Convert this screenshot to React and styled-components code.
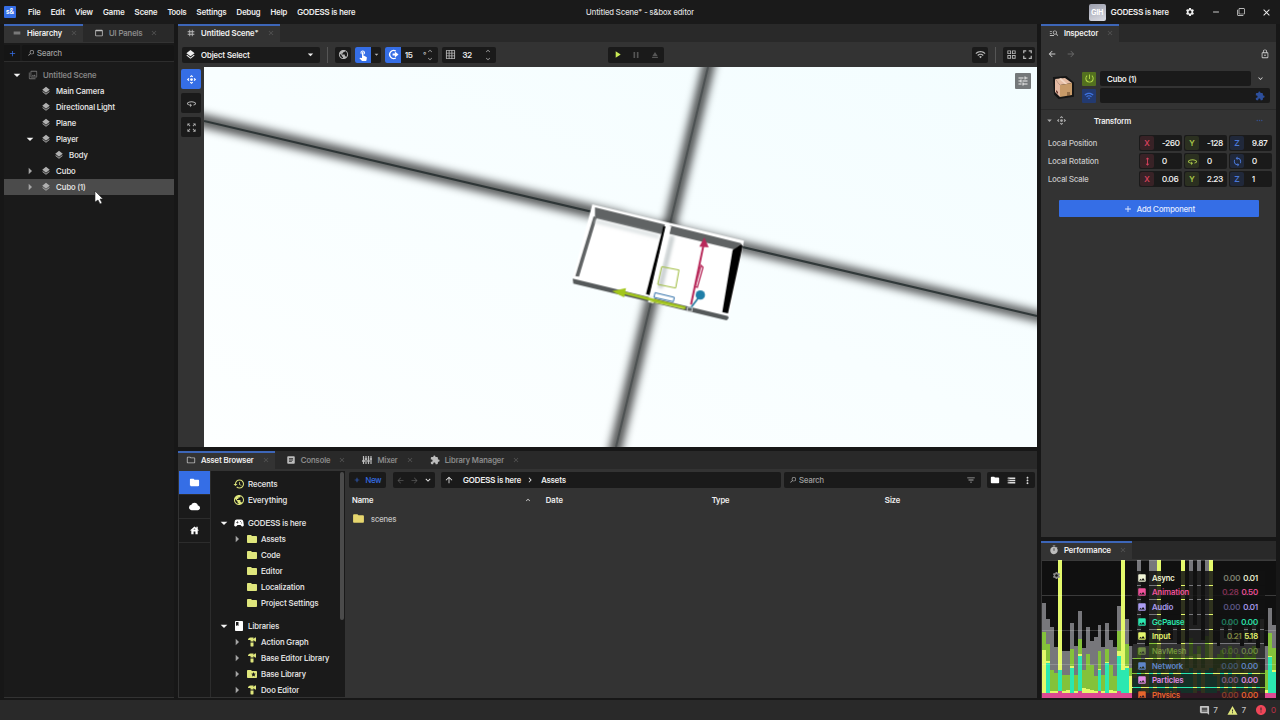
import React, { useState } from 'react';
import styled, { createGlobalStyle } from 'styled-components';
import {
  MdAdd, MdArrowBack, MdArrowDropDown, MdArrowForward, MdArrowRight, MdArrowUpward,
  MdBook, MdClose, MdCloud, MdComment, MdControlCamera, MdDragHandle, MdEject, MdError,
  MdExpandLess, MdExpandMore, MdExtension, MdFilterList, MdFolder,
  MdFolderSpecial, MdHardware, MdGridOn, MdGridView, MdHeight, MdHistory, MdHouse, MdImage,
  MdKeyboardArrowRight, MdLayers, MdManageSearch, MdMoreHoriz, MdMoreVert, MdOutlineFolder,
  MdOutlineZoomOutMap, MdPause, MdPlayArrow, MdPowerSettingsNew, MdPublic, MdRemove,
  MdSettings, MdSportsEsports, MdStorage, MdSync, MdTag, MdTimer, MdTouchApp, MdTune,
  MdWarning, MdWebAsset, MdWifi, Md360, MdFullscreen, MdFilterNone, MdSearch,
  MdArticle, MdOutlineLock, MdOutlinePhotoLibrary,
} from 'react-icons/md';

const GlobalStyle = createGlobalStyle`
  :root {
    --back: #171717;
    --well: #1a1a1a;
    --bar: #292929;
    --panel: #333333;
    --blue: #356ee6;
    --lime: #dfe67c;
    --text: #dedede;
    --muted: #8a8a8a;
  }

  * {
    box-sizing: border-box;
  }

  body {
    margin: 0;
    background: var(--back);
    color: var(--text);
    font-family: "Inter Display", Inter, "Liberation Sans", sans-serif;
    font-variation-settings: "opsz" 32;
    font-size: 8px;
    line-height: 10px;
    font-weight: 500;
  }

  button, input, select {
    margin: 0;
    padding: 0;
    border: 0;
    background: none;
    color: inherit;
    font: inherit;
    font-variation-settings: inherit;
  }

  svg {
    display: block;
    flex: none;
  }
`;

const Shell = styled.div`
  height: 100vh;
  display: flex;
  flex-direction: column;
`;

const TitleBar = styled.header`
  display: grid;
  grid-template-columns: 1fr auto 1fr;
  align-items: center;
  height: 24px;
  flex: none;
  background: var(--well);
`;

const MenuRow = styled.nav`
  display: flex;
  align-items: center;
  gap: 10px;
  padding-left: 4px;
  font-weight: 600;
  color: #eee;
`;

const Logo = styled.span`
  width: 12px;
  height: 12px;
  margin-right: 2px;
  border-radius: 1px;
  background: var(--blue);
  color: white;
  font-size: 7px;
  line-height: 12px;
  text-align: center;
`;

const WindowControls = styled.div`
  display: flex;
  align-items: center;
  justify-content: flex-end;
  gap: 16px;
  padding-right: 8px;
  color: #eee;

  button {
    display: flex;
  }
`;

const Account = styled.div`
  display: flex;
  align-items: center;
  gap: 5px;
  font-weight: 600;
`;

const Avatar = styled.span`
  width: 17px;
  height: 17px;
  border-radius: 2px;
  background: linear-gradient(160deg, #9a9dab, #dcdde4);
  color: white;
  font-size: 7px;
  font-weight: 700;
  line-height: 17px;
  text-align: center;
`;

const Workspace = styled.main`
  flex: 1;
  min-height: 0;
  display: grid;
  grid-template-columns: 170px minmax(0, 1fr) 235px;
  gap: 4px;
  padding: 0 4px 2px 4px;
`;

const Column = styled.div`
  min-width: 0;
  min-height: 0;
  display: flex;
  flex-direction: column;
  gap: 4px;
`;

const Panel = styled.section`
  display: flex;
  flex-direction: column;
  min-height: 0;
  overflow: hidden;
  flex: ${props => (props.$height ? `0 0 ${props.$height}` : '1')};
  background: var(--panel);
`;

const TabBar = styled.div`
  display: flex;
  flex: none;
  height: 18px;
  background: var(--bar);
`;

const TabButton = styled.div`
  display: flex;
  align-items: center;
  height: 18px;
  padding-left: ${props => (props.$active ? '0' : '3px')};
  padding-right: 5px;
  box-shadow: inset 0 2px ${props => (props.$active ? '#3d66b8' : 'transparent')};
  background: ${props => (props.$active ? 'var(--panel)' : 'transparent')};
  color: ${props => (props.$active ? '#f0f0f0' : 'var(--muted)')};
  font-weight: 600;

  button {
    display: flex;
    align-items: center;
    gap: 5px;
    padding-left: 8px;
    white-space: nowrap;
  }

  button > svg {
    color: #bdbdbd;
  }

  button:last-child {
    color: #555;
  }

  button:last-child > svg {
    color: #555;
  }
`;

const HierarchyBody = styled.div`
  flex: 1;
  display: flex;
  flex-direction: column;
  margin: 1px 0;
  background: var(--well);
`;

const SearchRow = styled.div`
  display: flex;
  gap: 2px;
  padding-top: 2px;
  border-bottom: 1px solid #2d2d2d;
`;

const AddButton = styled.button`
  display: flex;
  align-items: center;
  justify-content: center;
  width: 16px;
  height: 16px;
  background: #151515;
  color: var(--blue);
`;

const SearchBox = styled.label`
  flex: 1;
  min-width: 0;
  display: flex;
  align-items: center;
  gap: 2px;
  height: 16px;
  padding: 0 5px;
  border-radius: 2px;
  background: #151515;
  color: #aaa;

  input {
    flex: 1;
    min-width: 0;
    outline: none;
  }

  input::placeholder {
    color: #a0a0a0;
    opacity: 1;
  }

  svg:first-child {
    transform: scaleX(-1);
  }
`;

const Tree = styled.div`
  padding-top: 5px;
`;

const Twisty = styled.span`
  display: flex;
  width: 16px;
  height: 16px;
  color: ${props => (props.$open ? '#f4f4f4' : '#a5a5a5')};
`;

const RowIcon = styled.span`
  display: flex;
  color: ${props => props.$color || '#b0b0b0'};
`;

const TreeRow = styled.button`
  display: flex;
  align-items: center;
  width: 100%;
  height: 16px;
  padding-left: ${props => 5 + props.$depth * 13}px;
  background: ${props => (props.$selected ? '#4b4b4b' : 'transparent')};
  color: ${props => (props.$dim ? '#848484' : 'var(--text)')};
  font-weight: 600;
  text-align: left;
  white-space: nowrap;

  ${Twisty} {
    margin-right: ${props => (props.$compact ? '1px' : '3px')};
  }

  ${RowIcon} {
    margin-right: ${props => (props.$compact ? '3px' : '5px')};
  }
`;

const Toolbar = styled.div`
  display: flex;
  align-items: center;
  gap: 4px;
  flex: none;
  height: 25px;
  padding: 0 2px 0 4px;
`;

const ModeSelect = styled.label`
  display: flex;
  align-items: center;
  width: 138px;
  height: 16px;
  padding: 0 3px;
  gap: 4px;
  border-radius: 2px;
  background: var(--well);
  color: #eee;

  select {
    flex: 1;
    appearance: none;
    outline: none;
    padding-left: 1px;
    font-weight: 600;
  }
`;

const ToolGroup = styled.div`
  display: flex;
  align-items: center;
  height: 16px;
  border-radius: 2px;
  overflow: hidden;
  background: var(--well);
  color: #b5b5b5;
  margin-left: ${props => props.$left || '0'};
`;

const ToolButton = styled.button`
  display: flex;
  align-items: center;
  justify-content: center;
  width: ${props => props.$width || '16px'};
  height: 16px;
  background: ${props => (props.$active ? 'var(--blue)' : 'transparent')};
  color: ${props => (props.$active ? '#fff' : props.$color || 'inherit')};
`;

const StepInput = styled.input`
  width: ${props => props.$width};
  padding-left: 4px;
  color: #eee;
  font-weight: 600;
  outline: none;
`;

const Stepper = styled.span`
  display: flex;
  flex-direction: column;
  width: 12px;
`;

const Separator = styled.span`
  width: 1px;
  height: 16px;
  margin: 0 3px;
  background: #555;
`;

const SceneBody = styled.div`
  flex: 1;
  min-height: 0;
  display: flex;
`;

const ToolStrip = styled.div`
  display: flex;
  flex-direction: column;
  align-items: center;
  gap: 4px;
  width: 26px;
  flex: none;
  padding-top: 2px;
`;

const StripButton = styled.button`
  display: flex;
  align-items: center;
  justify-content: center;
  width: 20px;
  height: 20px;
  border-radius: 2px;
  background: ${props => (props.$active ? 'var(--blue)' : 'var(--well)')};
  color: ${props => (props.$active ? '#fff' : '#b0b0b0')};
`;

const Viewport = styled.div`
  position: relative;
  flex: 1;
  min-width: 0;
  background: #f8feff;

  > svg {
    width: 100%;
    height: 100%;
  }
`;

const ViewOptions = styled.button`
  position: absolute;
  top: 6px;
  right: 6px;
  display: flex;
  align-items: center;
  justify-content: center;
  width: 16px;
  height: 16px;
  border-radius: 1px;
  background: #74787a;
  color: #eee;
`;

const AssetBody = styled.div`
  flex: 1;
  min-height: 0;
  display: flex;
  padding: 2px 0 1px 1px;
`;

const SourceStrip = styled.div`
  width: 32px;
  flex: none;
  border-right: 1px solid #2c2c2c;
  background: var(--well);
`;

const SourceButton = styled.button`
  display: flex;
  align-items: center;
  justify-content: center;
  width: 100%;
  height: 24px;
  border-bottom: 1px solid #2c2c2c;
  background: ${props => (props.$active ? 'var(--blue)' : 'transparent')};
  color: #fff;
`;

const Locations = styled.div`
  position: relative;
  width: 134px;
  flex: none;
  overflow: hidden;
  padding-top: 5px;
  background: var(--well);
`;

const ScrollThumb = styled.div`
  position: absolute;
  top: 1px;
  right: 1px;
  width: 4px;
  height: 148px;
  border-radius: 2px;
  background: #4b4b4b;
`;

const LocationGroup = styled.div`
  margin-bottom: 7px;
`;

const Files = styled.div`
  flex: 1;
  min-width: 0;
`;

const FilesBar = styled.div`
  display: flex;
  gap: 3px;
  padding: 1px 2px 0 4px;
`;

const NewButton = styled.button`
  display: flex;
  align-items: center;
  justify-content: center;
  gap: 4px;
  width: 37px;
  height: 16px;
  margin-right: 4px;
  border-radius: 2px;
  background: var(--well);
  color: var(--blue);
`;

const PathBar = styled.div`
  flex: 3;
  display: flex;
  align-items: center;
  height: 16px;
  margin-left: 3px;
  padding-left: 3px;
  border-radius: 2px;
  background: var(--well);
  color: #f0f0f0;
  font-weight: 600;

  a {
    margin: 0 4px 0 9px;
    color: inherit;
    text-decoration: none;
    white-space: nowrap;
  }

  a:last-child {
    margin-left: 6px;
  }
`;

const AssetSearch = styled(SearchBox)`
  flex: 0 1 197px;
  background: var(--well);
`;

const AssetTable = styled.table`
  width: 100%;
  margin-top: 4px;
  border-collapse: collapse;
  table-layout: fixed;

  th {
    height: 16px;
    padding: 0 7px;
    color: #eee;
    font-weight: 600;
    text-align: left;
  }

  td {
    height: 21px;
    padding: 0 7px;
    color: #c4c4c4;
  }
`;

const NameCell = styled.div`
  display: flex;
  align-items: center;
  justify-content: ${props => (props.$spread ? 'space-between' : 'flex-start')};
  gap: 6px;
`;

const InspectorNav = styled.div`
  display: flex;
  align-items: center;
  gap: 9px;
  height: 24px;
  padding: 0 6px;
  color: #ccc;

  button {
    display: flex;
  }

  button:nth-child(2) {
    color: #666;
  }

  button:last-child {
    margin-left: auto;
  }
`;

const ObjectHeader = styled.div`
  display: grid;
  grid-template-columns: 28px 14px 1fr;
  gap: 4px;
  align-items: center;
  padding: 5px 6px 6px 9px;
`;

const FlagColumn = styled.div`
  display: flex;
  flex-direction: column;
  gap: 3px;
`;

const Flag = styled.button`
  display: flex;
  align-items: center;
  justify-content: center;
  width: 14px;
  height: 14px;
  border-radius: 1px;
  background: ${props => props.$back};
  color: ${props => props.$color};
`;

const NameRow = styled.div`
  display: flex;
  align-items: center;
  height: 15px;

  input {
    flex: 1;
    min-width: 0;
    height: 15px;
    padding: 0 7px;
    border-radius: 2px;
    outline: none;
    background: var(--well);
    color: #eee;
    font-weight: 600;
  }

  button {
    display: flex;
    justify-content: center;
    width: 19px;
  }
`;

const TagRow = styled.div`
  display: flex;
  align-items: center;
  justify-content: flex-end;
  height: 15px;
  margin-top: 2px;
  padding-right: 5px;
  border-radius: 2px;
  background: var(--well);
  color: #2d4f9c;
`;

const ComponentTitle = styled.div`
  display: flex;
  align-items: center;
  gap: 1px;
  height: 22px;
  padding: 0 12px 0 3px;
  border-top: 1px solid #292929;
  font-weight: 600;
  color: #aaa;

  h2 {
    flex: 1;
    margin: 0 0 0 26px;
    color: #eee;
    font: inherit;
    font-variation-settings: inherit;
  }
`;

const Properties = styled.div`
  display: flex;
  flex-direction: column;
  gap: 2px;
  padding: 4px 4px 0 7px;
`;

const PropertyRow = styled.div`
  display: grid;
  grid-template-columns: 1fr 43px 43px 43px;
  gap: 2px;
  align-items: center;
  color: #c8c8c8;
`;

const AxisField = styled.label`
  display: flex;
  align-items: center;
  height: 16px;
  border-radius: 2px;
  background: var(--well);
  font-weight: 600;

  input {
    flex: 1;
    min-width: 0;
    padding-left: 8px;
    outline: none;
    color: #eee;
  }
`;

const axisColors = {
  x: ['#d6405c', '#382226'],
  y: ['#a7c649', '#2b3020'],
  z: ['#4a78d8', '#20283a'],
};

const AxisBadge = styled.span`
  display: flex;
  align-items: center;
  justify-content: center;
  width: 14px;
  height: 14px;
  margin-left: 1px;
  border-radius: 2px;
  color: ${props => axisColors[props.$axis][0]};
  background: ${props => axisColors[props.$axis][1]};
`;

const AddComponent = styled.button`
  display: flex;
  align-items: center;
  justify-content: center;
  gap: 4px;
  height: 17px;
  margin: 13px 17px 13px 18px;
  border-radius: 1px;
  background: var(--blue);
  color: #e4ecff;
`;

const PerfBody = styled.div`
  position: relative;
  flex: 1;
  min-height: 0;
  margin: 1px 0 0 1px;
  background: #101010;
  overflow: hidden;

  > svg {
    width: 100%;
    height: 100%;
  }
`;

const PerfSettings = styled.button`
  position: absolute;
  top: 11px;
  left: 10px;
  color: #888;
`;

const Legend = styled.div`
  position: absolute;
  top: 11px;
  bottom: -4px;
  right: 11px;
  left: 90px;
  display: grid;
  grid-auto-rows: 1fr;
  gap: 1px;
`;

const LegendRow = styled.div`
  display: flex;
  align-items: center;
  gap: 3px;
  padding: 0 7px 0 5px;
  background: rgba(17, 17, 17, 0.86);
  color: ${props => props.$color};
  font-weight: 600;
  opacity: ${props => (props.$dim ? 0.8 : 1)};

  span {
    flex: 1;
    margin-left: 2px;
  }

  em {
    font-style: normal;
    opacity: 0.5;
  }
`;

const StatusBar = styled.footer`
  display: flex;
  align-items: center;
  justify-content: flex-end;
  gap: 9px;
  flex: none;
  height: 20px;
  padding-right: 4px;
  background: var(--bar);
`;

const StatusItem = styled.span`
  display: flex;
  align-items: center;
  gap: 4px;
  color: ${props => props.$color || '#c4c4c4'};
`;

const Pointer = styled.svg`
  position: fixed;
  left: 94px;
  top: 190px;
  width: 10px;
  height: 15px;
  pointer-events: none;
`;

const menus = ['File', 'Edit', 'View', 'Game', 'Scene', 'Tools', 'Settings', 'Debug', 'Help', 'GODESS is here'];

const sceneTree = [
  { name: 'Untitled Scene', depth: 0, open: true, scene: true },
  { name: 'Main Camera', depth: 1 },
  { name: 'Directional Light', depth: 1 },
  { name: 'Plane', depth: 1 },
  { name: 'Player', depth: 1, open: true },
  { name: 'Body', depth: 2 },
  { name: 'Cubo', depth: 1, open: false },
  { name: 'Cubo (1)', depth: 1, open: false },
];

const lime = '#dfe67c';

const locations = [
  [
    { name: 'Recents', depth: 0, icon: MdHistory, color: lime },
    { name: 'Everything', depth: 0, icon: MdPublic, color: lime },
  ],
  [
    { name: 'GODESS is here', depth: 0, icon: MdSportsEsports, color: '#fff', open: true },
    { name: 'Assets', depth: 1, icon: MdFolder, color: lime, open: false },
    { name: 'Code', depth: 1, icon: MdFolder, color: lime },
    { name: 'Editor', depth: 1, icon: MdFolder, color: lime },
    { name: 'Localization', depth: 1, icon: MdFolder, color: lime },
    { name: 'Project Settings', depth: 1, icon: MdFolder, color: lime },
  ],
  [
    { name: 'Libraries', depth: 0, icon: MdBook, color: '#fff', open: true },
    { name: 'Action Graph', depth: 1, icon: MdHardware, color: lime, open: false },
    { name: 'Base Editor Library', depth: 1, icon: MdHardware, color: lime, open: false },
    { name: 'Base Library', depth: 1, icon: MdFolderSpecial, color: lime, open: false },
    { name: 'Doo Editor', depth: 1, icon: MdHardware, color: lime, open: false },
  ],
];

const transform = [
  { label: 'Local Position', values: ['-260', '-128', '9.87'], marks: ['X', 'Y', 'Z'] },
  {
    label: 'Local Rotation',
    values: ['0', '0', '0'],
    marks: [<MdHeight size={11} />, <Md360 size={11} />, <MdSync size={11} />],
  },
  { label: 'Local Scale', values: ['0.06', '2.23', '1'], marks: ['X', 'Y', 'Z'] },
];

const timings = [
  { name: 'Async', avg: '0.00', max: '0.01', color: '#f0f4d6' },
  { name: 'Animation', avg: '0.28', max: '0.50', color: '#f0529c' },
  { name: 'Audio', avg: '0.00', max: '0.01', color: '#ab9df2' },
  { name: 'GcPause', avg: '0.00', max: '0.00', color: '#2be8b0' },
  { name: 'Input', avg: '0.21', max: '5.18', color: '#e6f76e' },
  { name: 'NavMesh', avg: '0.00', max: '0.00', color: '#6d8a3c', dim: true },
  { name: 'Network', avg: '0.00', max: '0.00', color: '#5f86c8' },
  { name: 'Particles', avg: '0.00', max: '0.00', color: '#e08ae6' },
  { name: 'Physics', avg: '0.00', max: '0.00', color: '#e8662c' },
];

// stacked heights of one frame: grey, green, yellow, teal
const frames = [
  [94, 66, 48, 0], [78, 54, 37, 35], [70, 28, 7, 0], [51, 25, 7, 0], [0, 0, 137, 28],
  [47, 23, 7, 0], [47, 23, 8, 0], [74, 49, 32, 30], [52, 23, 7, 0], [86, 59, 44, 42],
  [50, 28, 10, 0], [70, 44, 9, 0], [57, 33, 8, 0], [61, 22, 7, 0], [72, 47, 29, 28],
  [51, 23, 7, 0], [74, 49, 36, 35], [58, 33, 8, 0], [51, 22, 7, 0], [91, 67, 47, 42],
  [0, 0, 137, 28], [78, 54, 32, 30], [52, 30, 22, 0], [54, 40, 24, 20], [137, 50, 30, 28],
  [58, 38, 20, 0], [52, 36, 40, 0], [137, 60, 40, 28], [137, 56, 34, 0], [0, 0, 137, 28],
  [60, 45, 26, 22], [66, 38, 30, 0], [58, 50, 40, 28], [70, 48, 26, 0], [54, 44, 36, 20],
  [0, 0, 137, 28], [56, 42, 30, 26], [137, 60, 42, 30], [72, 44, 30, 0], [137, 52, 44, 28],
  [58, 40, 30, 0], [137, 62, 40, 28], [0, 0, 137, 30], [56, 40, 26, 22], [52, 44, 30, 0],
  [70, 48, 34, 28], [60, 40, 26, 0], [78, 52, 32, 28], [56, 40, 30, 0], [62, 44, 38, 24],
  [52, 40, 26, 22], [70, 44, 30, 0], [56, 42, 32, 26], [76, 52, 36, 0], [50, 36, 28, 20],
  [78, 27, 10, 0], [52, 28, 8, 0], [89, 65, 42, 41], [72, 50, 28, 26],
];

const frameColors = ['#77777b', '#84c23a', '#e4f96b', '#2be8b0'];

function MixerIcon({ size }) {
  return (
    <svg width={size} height={size} viewBox="0 0 10 10" stroke="currentColor" aria-hidden="true">
      <path d="M1.5 1v8M4 1v8M6.5 1v8M9 1v8" strokeWidth="1.2" />
      <path d="M0 6h3M2.8 4h2.4M5.2 6h2.6M7.8 4h2.2" strokeWidth="1.6" />
    </svg>
  );
}

function AngleIcon({ size }) {
  return (
    <svg width={size} height={size} viewBox="0 0 12 12" fill="none" stroke="currentColor" aria-hidden="true">
      <path d="M8.5 2.2A4.4 4.4 0 1 0 8.5 9.8" strokeWidth="1.5" />
      <path d="M5 6h3" strokeWidth="2" />
      <path d="M7.5 2.8 11.5 6 7.5 9.2Z" fill="currentColor" stroke="none" />
    </svg>
  );
}

function Tab({ icon: Icon, label, active }) {
  return (
    <TabButton $active={active}>
      <button role="tab" aria-selected={!!active}>
        <Icon size={10} />
        {label}
      </button>
      <button aria-label={`Close ${label}`}>
        <MdClose size={8} />
      </button>
    </TabButton>
  );
}

function Arrow({ open }) {
  if (open === undefined) return <Twisty />;
  return <Twisty $open={open}>{open ? <MdArrowDropDown size={16} /> : <MdArrowRight size={16} />}</Twisty>;
}

function Steps() {
  return (
    <Stepper>
      <MdExpandLess size={8} />
      <MdExpandMore size={8} />
    </Stepper>
  );
}

function SceneView() {
  return (
    <svg viewBox="0 0 833 380" preserveAspectRatio="xMidYMid slice" role="img" aria-label="Scene view">
      <defs>
        <linearGradient id="sky" x1="0" y1="1" x2="1" y2="0">
          <stop offset="0" stopColor="#fdffff" />
          <stop offset="1" stopColor="#f3fdff" />
        </linearGradient>
        <filter id="soft" x="-20%" y="-20%" width="140%" height="140%">
          <feGaussianBlur stdDeviation="4" />
        </filter>
      </defs>
      <rect width="833" height="380" fill="url(#sky)" />
      <g filter="url(#soft)" stroke="#000" fill="none">
        <path d="M-30 47 420 152" strokeWidth="13" opacity=".66" />
        <path d="M420 152 870 258" strokeWidth="11" opacity=".66" />
        <path d="M509 -20 407 400" strokeWidth="12" opacity=".7" />
      </g>
      <g stroke="#20292a" strokeWidth="2" fill="none" opacity=".8">
        <path d="M0 54 833 249" />
        <path d="M504 0 412 380" opacity=".4" />
      </g>
      <g transform="translate(356 123) scale(.3333)">
        <path d="M97 43 552 152 508 378 500 386 38 272 38 262Z" fill="#fff" />
        <path d="M105 52 315 104 303 132 105 84Z" fill="#606364" />
        <path d="M101 78 110 84 57 260 46 258Z" fill="#606364" />
        <path d="M108 88 298 134 295 146 105 99Z" fill="#e0e5e6" filter="url(#soft)" />
        <path d="M310 108 318 110 270 316 258 312Z" fill="#000" />
        <path d="M328 106 545 160 522 178 322 130Z" fill="#606364" />
        <path d="M330 136 344 140 308 296 292 292Z" fill="#ccd2d3" filter="url(#soft)" />
        <path d="M543 162 548 168 504 370 487 366 518 180Z" fill="#000" />
        <path d="M38 266 504 378 506 384 500 391 40 281Z" fill="#55595a" />
        <path d="M318 104 334 108 284 322 268 318Z" fill="#fff" />
        <path d="M268 316 284 320 280 340 264 336Z" fill="#f2f5f4" />
        <path d="M190 308 376 354" stroke="#a2c61b" strokeWidth="8" />
        <path d="M156 303 198 294 192 322Z" fill="#a2c61b" />
        <path d="M270 334 370 355" stroke="#c3dd57" strokeWidth="3" />
        <path d="M305 230 357 240 347 294 293 283Z" fill="none" stroke="#9dbb3a" strokeWidth="3" />
        <path d="M285 308 343 322 340 335 282 322Z" fill="none" stroke="#2c6da8" strokeWidth="3" />
        <path d="M393 344 430 168" stroke="#b8295a" strokeWidth="6" />
        <path d="M433 142 446 172 418 170Z" fill="#b8295a" />
        <path d="M423 226 429 232 412 292 405 290Z" fill="none" stroke="#b8295a" strokeWidth="4" />
        <path d="M391 355 418 320" stroke="#24799f" strokeWidth="5" />
        <circle cx="421" cy="315" r="14" fill="#1f7ea8" />
        <path d="M382 352h14v12h-14z" fill="none" stroke="#d0d3d4" strokeWidth="3" />
      </g>
    </svg>
  );
}

function FrameChart() {
  return (
    <svg viewBox="0 0 236 137" preserveAspectRatio="none" role="img" aria-label="Frame timings" shapeRendering="crispEdges">
      {frames.map((frame, i) => (
        <g key={i}>
          {frame.map((h, k) => (
            <rect key={k} x={i * 4} y={137 - h} width="4" height={h} fill={frameColors[k]} />
          ))}
          <rect x={i * 4} y={i % 5 === 4 ? 130 : 132} width="4" height="7" fill="#dc4a92" />
        </g>
      ))}
      {[0, 35, 69, 103].map(y => (
        <rect key={y} y={y} width="236" height="1" fill="#fff" opacity=".18" />
      ))}
    </svg>
  );
}

function Crate() {
  return (
    <svg width="27" height="27" viewBox="0 0 27 27" aria-hidden="true">
      <path d="M4 4 16 3 23 9 23 22 9 24 5 20Z" fill="#151515" stroke="#151515" strokeWidth="2" />
      <path d="M5 5 15 4 22 9 10 11Z" fill="#e6bda4" />
      <path d="M10 11 22 9 22 21 10 23Z" fill="#c79a68" />
      <path d="M5 5 10 11 10 23 5 18Z" fill="#e4b9a3" />
      <path d="M9 5 11 4 17 10 15 10Z" fill="#f3d8c5" />
      <path d="M17 19h3M17 21h3" stroke="#5d4124" />
      <path d="M6 16 8 18 8 20 6 18Z" fill="#68372e" />
    </svg>
  );
}

function Hierarchy({ selected, onSelect }) {
  return (
    <Panel>
      <TabBar role="tablist">
        <Tab icon={MdDragHandle} label="Hierarchy" active />
        <Tab icon={MdWebAsset} label="UI Panels" />
      </TabBar>
      <HierarchyBody>
        <SearchRow>
          <AddButton aria-label="Add object"><MdAdd size={9} /></AddButton>
          <SearchBox>
            <MdSearch size={8} />
            <input aria-label="Search hierarchy" placeholder="Search" />
          </SearchBox>
        </SearchRow>
        <Tree>
          {sceneTree.map(item => (
            <TreeRow
              key={item.name}
              $depth={item.depth}
              $dim={item.scene}
              $selected={item.name === selected}
              onClick={() => onSelect(item.name)}
            >
              <Arrow open={item.open} />
              <RowIcon $color={item.scene ? '#707070' : undefined}>
                {item.scene ? <MdOutlinePhotoLibrary size={10} /> : <MdLayers size={10} />}
              </RowIcon>
              <span>{item.name}</span>
            </TreeRow>
          ))}
        </Tree>
      </HierarchyBody>
    </Panel>
  );
}

function SceneEditor() {
  return (
    <Panel>
      <TabBar role="tablist">
        <Tab icon={MdTag} label="Untitled Scene*" active />
      </TabBar>
      <Toolbar>
        <ModeSelect>
          <MdLayers size={11} />
          <select aria-label="Editor mode">
            <option>Object Select</option>
          </select>
          <MdArrowDropDown size={13} />
        </ModeSelect>
        <Separator />
        <ToolGroup><ToolButton aria-label="Global space"><MdPublic size={11} /></ToolButton></ToolGroup>
        <ToolGroup>
          <ToolButton $active aria-label="Snap"><MdTouchApp size={12} /></ToolButton>
          <ToolButton $width="10px" aria-label="Snap options"><MdArrowDropDown size={9} /></ToolButton>
        </ToolGroup>
        <ToolGroup>
          <ToolButton $active aria-label="Angle snap"><AngleIcon size={11} /></ToolButton>
          <StepInput $width="22px" aria-label="Angle step" defaultValue="15" />
          °
          <Steps />
        </ToolGroup>
        <ToolGroup>
          <ToolButton aria-label="Grid snap"><MdGridOn size={11} /></ToolButton>
          <StepInput $width="26px" aria-label="Grid step" defaultValue="32" />
          <Steps />
        </ToolGroup>
        <ToolGroup $left="108px">
          <ToolButton $width="18px" $color="#c9ea55" aria-label="Play"><MdPlayArrow size={11} /></ToolButton>
          <ToolButton $width="20px" $color="#555" aria-label="Pause"><MdPause size={10} /></ToolButton>
          <ToolButton $width="18px" $color="#555" aria-label="Eject"><MdEject size={10} /></ToolButton>
        </ToolGroup>
        <ToolGroup $left="auto"><ToolButton aria-label="Network"><MdWifi size={11} /></ToolButton></ToolGroup>
        <Separator />
        <ToolGroup>
          <ToolButton aria-label="Layout"><MdGridView size={11} /></ToolButton>
          <ToolButton aria-label="Fullscreen"><MdFullscreen size={15} /></ToolButton>
        </ToolGroup>
      </Toolbar>
      <SceneBody>
        <ToolStrip>
          <StripButton $active aria-label="Move"><MdControlCamera size={11} /></StripButton>
          <StripButton aria-label="Rotate"><Md360 size={11} /></StripButton>
          <StripButton aria-label="Scale"><MdOutlineZoomOutMap size={11} /></StripButton>
        </ToolStrip>
        <Viewport>
          <SceneView />
          <ViewOptions aria-label="View options"><MdTune size={12} /></ViewOptions>
        </Viewport>
      </SceneBody>
    </Panel>
  );
}

function AssetBrowser() {
  return (
    <Panel $height="247px">
      <TabBar role="tablist">
        <Tab icon={MdOutlineFolder} label="Asset Browser" active />
        <Tab icon={MdArticle} label="Console" />
        <Tab icon={MixerIcon} label="Mixer" />
        <Tab icon={MdExtension} label="Library Manager" />
      </TabBar>
      <AssetBody>
        <SourceStrip>
          <SourceButton $active aria-label="Project"><MdFolder size={11} /></SourceButton>
          <SourceButton aria-label="Cloud"><MdCloud size={11} /></SourceButton>
          <SourceButton aria-label="Core"><MdHouse size={11} /></SourceButton>
        </SourceStrip>
        <Locations>
          {locations.map(group => (
            <LocationGroup key={group[0].name}>
              {group.map(({ name, depth, icon: Icon, color, open }) => (
                <TreeRow key={name} $depth={depth} $compact>
                  <Arrow open={open} />
                  <RowIcon $color={color}><Icon size={12} /></RowIcon>
                  <span>{name}</span>
                </TreeRow>
              ))}
            </LocationGroup>
          ))}
          <ScrollThumb />
        </Locations>
        <Files>
          <FilesBar>
            <NewButton><MdAdd size={8} />New</NewButton>
            <ToolGroup>
              <ToolButton $width="14px" $color="#555" aria-label="Back"><MdArrowBack size={9} /></ToolButton>
              <ToolButton $width="14px" $color="#555" aria-label="Forward"><MdArrowForward size={9} /></ToolButton>
              <ToolButton $width="14px" $color="#eee" aria-label="History"><MdExpandMore size={10} /></ToolButton>
            </ToolGroup>
            <PathBar>
              <MdArrowUpward size={10} />
              <a href="#project">GODESS is here</a>
              <MdKeyboardArrowRight size={10} />
              <a href="#assets">Assets</a>
            </PathBar>
            <AssetSearch>
              <MdSearch size={8} />
              <input aria-label="Search assets" placeholder="Search" />
              <MdFilterList size={10} />
            </AssetSearch>
            <ToolGroup $left="3px">
              <ToolButton $color="#fff" aria-label="Folders"><MdFolder size={10} /></ToolButton>
              <ToolButton $color="#ddd" aria-label="List"><MdStorage size={9} /></ToolButton>
              <ToolButton $color="#ddd" aria-label="More"><MdMoreVert size={11} /></ToolButton>
            </ToolGroup>
          </FilesBar>
          <AssetTable>
            <colgroup>
              <col style={{ width: '28%' }} />
              <col style={{ width: '24%' }} />
              <col style={{ width: '25%' }} />
              <col />
            </colgroup>
            <thead>
              <tr>
                <th><NameCell $spread>Name<MdExpandLess size={8} /></NameCell></th>
                <th>Date</th>
                <th>Type</th>
                <th>Size</th>
              </tr>
            </thead>
            <tbody>
              <tr>
                <td><NameCell><MdFolder size={13} color="#e6d66e" />scenes</NameCell></td>
                <td />
                <td />
                <td />
              </tr>
            </tbody>
          </AssetTable>
        </Files>
      </AssetBody>
    </Panel>
  );
}

function Inspector({ name }) {
  return (
    <Panel>
      <TabBar role="tablist">
        <Tab icon={MdManageSearch} label="Inspector" active />
      </TabBar>
      <InspectorNav>
        <button aria-label="Back"><MdArrowBack size={10} /></button>
        <button aria-label="Forward"><MdArrowForward size={10} /></button>
        <button aria-label="Lock"><MdOutlineLock size={10} /></button>
      </InspectorNav>
      <ObjectHeader>
        <Crate />
        <FlagColumn>
          <Flag $back="#53701f" $color="#b6dc4a" aria-label="Enabled"><MdPowerSettingsNew size={11} /></Flag>
          <Flag $back="#233a70" $color="#3f74e0" aria-label="Network"><MdWifi size={10} /></Flag>
        </FlagColumn>
        <div>
          <NameRow>
            <input aria-label="Object name" value={name} readOnly />
            <button aria-label="More"><MdExpandMore size={9} /></button>
          </NameRow>
          <TagRow><MdExtension size={10} /></TagRow>
        </div>
      </ObjectHeader>
      <ComponentTitle>
        <MdArrowDropDown size={11} />
        <MdControlCamera size={11} />
        <h2>Transform</h2>
        <MdMoreHoriz size={9} color="#35508f" />
      </ComponentTitle>
      <Properties>
        {transform.map(row => (
          <PropertyRow key={row.label}>
            <span>{row.label}</span>
            {['x', 'y', 'z'].map((axis, i) => (
              <AxisField key={axis}>
                <AxisBadge $axis={axis}>{row.marks[i]}</AxisBadge>
                <input aria-label={`${row.label} ${axis}`} defaultValue={row.values[i]} />
              </AxisField>
            ))}
          </PropertyRow>
        ))}
      </Properties>
      <AddComponent><MdAdd size={10} />Add Component</AddComponent>
    </Panel>
  );
}

function Performance() {
  return (
    <Panel $height="157px">
      <TabBar role="tablist">
        <Tab icon={MdTimer} label="Performance" active />
      </TabBar>
      <PerfBody>
        <FrameChart />
        <PerfSettings aria-label="Performance settings"><MdSettings size={9} /></PerfSettings>
        <Legend>
          {timings.map(item => (
            <LegendRow key={item.name} $color={item.color} $dim={item.dim}>
              <MdImage size={10} />
              <span>{item.name}</span>
              <em>{item.avg}</em>
              {item.max}
            </LegendRow>
          ))}
        </Legend>
      </PerfBody>
    </Panel>
  );
}

const App = () => {
  const [selected, setSelected] = useState('Cubo (1)');

  return (
    <Shell>
      <GlobalStyle />
      <TitleBar>
        <MenuRow>
          <Logo>s&amp;</Logo>
          {menus.map(menu => <button key={menu}>{menu}</button>)}
        </MenuRow>
        <span>Untitled Scene* - s&amp;box editor</span>
        <WindowControls>
          <Account><Avatar>GIH</Avatar>GODESS is here</Account>
          <button aria-label="Settings"><MdSettings size={10} /></button>
          <button aria-label="Minimize"><MdRemove size={10} /></button>
          <button aria-label="Restore"><MdFilterNone size={8} /></button>
          <button aria-label="Close"><MdClose size={11} /></button>
        </WindowControls>
      </TitleBar>
      <Workspace>
        <Column>
          <Hierarchy selected={selected} onSelect={setSelected} />
        </Column>
        <Column>
          <SceneEditor />
          <AssetBrowser />
        </Column>
        <Column>
          <Inspector name={selected} />
          <Performance />
        </Column>
      </Workspace>
      <StatusBar>
        <StatusItem><MdComment size={11} />7</StatusItem>
        <StatusItem><MdWarning size={11} color="#dfe67c" />7</StatusItem>
        <StatusItem $color="#b03045"><MdError size={12} color="#ee4658" />0</StatusItem>
      </StatusBar>
      <Pointer viewBox="0 0 10 15" aria-hidden="true">
        <path d="M1 1v11l3-2 2 4 2-1-2-4h3Z" fill="#fff" stroke="#222" strokeWidth=".6" />
      </Pointer>
    </Shell>
  );
};

export default App;
